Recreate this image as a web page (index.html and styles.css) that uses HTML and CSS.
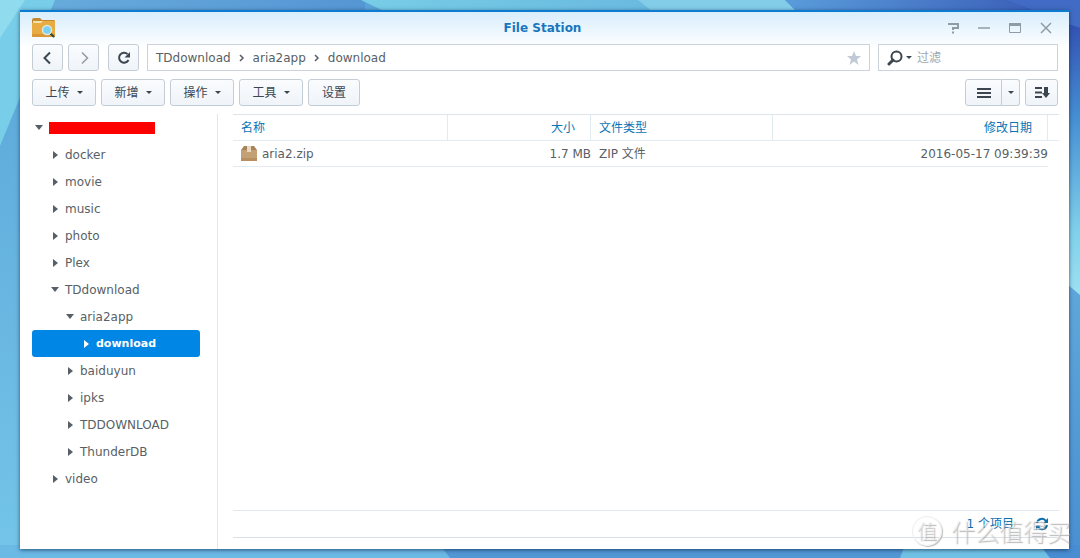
FILE: index.html
```html
<!DOCTYPE html>
<html lang="zh-CN">
<head>
<meta charset="utf-8">
<title>File Station</title>
<link rel="stylesheet" href="styles.css">
</head>
<body>
<svg class="wallpaper" viewBox="0 0 1080 558" preserveAspectRatio="none" aria-hidden="true">
  <defs>
    <linearGradient id="left" x1="0" y1="0" x2="0" y2="1"><stop offset="0" stop-color="#5aa5d8"/><stop offset="1" stop-color="#74c5e9"/></linearGradient>
    <linearGradient id="top" x1="0" y1="0" x2="1" y2="0"><stop offset="0" stop-color="#66abdc"/><stop offset="1" stop-color="#5596d4"/></linearGradient>
    <linearGradient id="teal" x1="0" y1="0" x2="1" y2="0"><stop offset="0" stop-color="#78cde6"/><stop offset="1" stop-color="#62b0dd"/></linearGradient>
    <linearGradient id="deep" x1="0" y1="0" x2="1" y2="0"><stop offset="0" stop-color="#5a9cdb"/><stop offset="1" stop-color="#3655b3"/></linearGradient>
    <linearGradient id="right" x1="0" y1="0" x2="0" y2="1"><stop offset="0" stop-color="#3351b3"/><stop offset=".35" stop-color="#4691d4"/><stop offset=".75" stop-color="#7fd0eb"/><stop offset="1" stop-color="#a0e2f2"/></linearGradient>
    <linearGradient id="low" x1="0" y1="0" x2="0" y2="1"><stop offset="0" stop-color="#60a8da"/><stop offset="1" stop-color="#4a8fd2"/></linearGradient>
  </defs>
  <path fill="url(#left)" d="M0 0H1080V558H0z"/>
  <path fill="#78cde8" d="M0 0H60L0 146z"/>
  <path fill="#90dbee" d="M0 0H25L0 38z"/>
  <path fill="url(#top)" d="M55 0H365V12H50z"/>
  <path fill="url(#teal)" d="M361 0H790V12H386z"/>
  <path fill="#83cde9" d="M638 0H785L797 12H653z"/>
  <path fill="url(#deep)" d="M785 0H1080V12H797z"/>
  <path fill="#314da9" d="M1005 0H1080V30L1065 24L1032 10z"/>
  <path fill="#416bc4" d="M1005 0H1080V28L1065 23L1032 10z"/>
  <path fill="url(#right)" d="M1060 24L1080 28V300H1060z"/>
  <path fill="url(#low)" d="M1060 278L1080 295V558H1060z"/>
  <path fill="#6bb9e5" d="M0 545H1080V558H0z"/>
  <path fill="#5298d5" d="M440 545H905L901 558H450z"/>
  <path fill="#70c1e6" d="M905 545H1048L1060 558H900z"/>
  <path fill="#488dd1" d="M1040 545H1080V558H1050z"/>
</svg>

<main class="window">
  <header class="titlebar">
    <svg class="app-icon" width="24" height="20" viewBox="0 0 24 20" aria-hidden="true">
      <path fill="#c38a32" d="M0 2Q0 0 2 0H8L10 2H22Q23 2 23 4V9H0z"/>
      <path fill="#f6e2ac" d="M1 3H22V6H1z"/>
      <path fill="#e8ac42" d="M0 5H9L11 3H23V18Q23 19 22 19H1Q0 19 0 18z"/>
      <path fill="#d99835" d="M0 16H23V18Q23 19 22 19H1Q0 19 0 18z"/>
      <path stroke="#2d4c42" stroke-width="2" stroke-linecap="round" d="M18.500 15.500L21.500 18.500"/>
      <circle cx="15" cy="12" r="4.500" fill="#79d0f0" stroke="#e0e8dd" stroke-width="1.500"/>
    </svg>
    <h1 class="title">File Station</h1>
    <div class="window-controls">
      <button class="window-button" aria-label="帮助"><svg width="14" height="14" viewBox="0 0 14 14"><path d="M2 3H12V7H7V9M7 10.500V12.500" fill="none" stroke="currentColor" stroke-width="2"/></svg></button>
      <button class="window-button" aria-label="最小化"><svg width="14" height="14" viewBox="0 0 14 14"><path d="M1 7H13" stroke="currentColor" stroke-width="1.500"/></svg></button>
      <button class="window-button" aria-label="最大化"><svg width="14" height="14" viewBox="0 0 14 14"><path d="M1.500 2.500H12.500V11.500H1.500z" fill="none" stroke="currentColor"/><path d="M1 2H13V5H1z" fill="currentColor"/></svg></button>
      <button class="window-button" aria-label="关闭"><svg width="14" height="14" viewBox="0 0 14 14"><path d="M2 2L12 12M12 2L2 12" stroke="currentColor" stroke-width="1.500"/></svg></button>
    </div>
  </header>

  <div class="navigation">
    <button class="button nav-button" aria-label="后退"><svg width="16" height="16" viewBox="0 0 16 16"><path d="M10 2.500L4.500 8L10 13.500" fill="none" stroke="currentColor" stroke-width="2"/></svg></button>
    <button class="button nav-button nav-forward" aria-label="前进"><svg width="16" height="16" viewBox="0 0 16 16"><path d="M6 2.500L11.500 8L6 13.500" fill="none" stroke="currentColor" stroke-width="1.500"/></svg></button>
    <button class="button nav-button refresh" aria-label="刷新"><svg width="16" height="16" viewBox="0 0 16 16"><path d="M11.500 4A5 5 0 1 0 12.500 10" fill="none" stroke="currentColor" stroke-width="2"/><path d="M14 2V7.500H8.500z" fill="currentColor"/></svg></button>
    <nav class="path" aria-label="路径">
      <a class="crumb" href="#">TDdownload</a>
      <svg width="6" height="8" viewBox="0 0 6 8"><path d="M1 1L4 4L1 7" fill="none" stroke="currentColor" stroke-width="1.500"/></svg>
      <a class="crumb" href="#">aria2app</a>
      <svg width="6" height="8" viewBox="0 0 6 8"><path d="M1 1L4 4L1 7" fill="none" stroke="currentColor" stroke-width="1.500"/></svg>
      <a class="crumb" href="#">download</a>
      <button class="favorite" aria-label="收藏"><svg width="14" height="14" viewBox="0 0 14 14"><path d="M7 0L9 5H14L10 8.500L11.500 14L7 10.500L2.500 14L4 8.500L0 5H5z" fill="currentColor"/></svg></button>
    </nav>
    <label class="search">
      <svg width="16" height="16" viewBox="0 0 16 16" aria-hidden="true"><circle cx="9.500" cy="6.500" r="5" fill="none" stroke="currentColor" stroke-width="2"/><path d="M6 10L2 14" stroke="currentColor" stroke-width="3" stroke-linecap="round"/></svg>
      <span class="caret"></span>
      <input class="search-input" type="text" placeholder="过滤" aria-label="过滤">
    </label>
  </div>

  <div class="toolbar">
    <button class="button menu-button">上传<span class="caret"></span></button>
    <button class="button menu-button">新增<span class="caret"></span></button>
    <button class="button menu-button">操作<span class="caret"></span></button>
    <button class="button menu-button">工具<span class="caret"></span></button>
    <button class="button settings">设置</button>
    <div class="view-split">
      <button class="button view-mode" aria-label="列表"><svg width="14" height="12" viewBox="0 0 14 12"><path d="M0 2H14M0 6H14M0 10H14" stroke="currentColor" stroke-width="2"/></svg></button>
      <button class="button view-menu" aria-label="查看方式"><span class="caret"></span></button>
    </div>
    <button class="button sort" aria-label="排序"><svg width="16" height="14" viewBox="0 0 16 14"><path d="M1 2H8M1 6.500H8M1 11H8" stroke="currentColor" stroke-width="2"/><path d="M10 1H14V7H16L12 12L8 7H10z" fill="currentColor"/></svg></button>
  </div>

  <div class="content">
    <aside class="sidebar">
      <ul class="tree">
        <li><a class="node level-0" href="#" aria-label="根目录"><span class="arrow open"></span><span class="redacted"></span></a></li>
        <li><a class="node level-1" href="#"><span class="arrow"></span>docker</a></li>
        <li><a class="node level-1" href="#"><span class="arrow"></span>movie</a></li>
        <li><a class="node level-1" href="#"><span class="arrow"></span>music</a></li>
        <li><a class="node level-1" href="#"><span class="arrow"></span>photo</a></li>
        <li><a class="node level-1" href="#"><span class="arrow"></span>Plex</a></li>
        <li><a class="node level-1" href="#"><span class="arrow open"></span>TDdownload</a></li>
        <li><a class="node level-2" href="#"><span class="arrow open"></span>aria2app</a></li>
        <li><a class="node level-3 selected" href="#"><span class="arrow"></span>download</a></li>
        <li><a class="node level-2" href="#"><span class="arrow"></span>baiduyun</a></li>
        <li><a class="node level-2" href="#"><span class="arrow"></span>ipks</a></li>
        <li><a class="node level-2" href="#"><span class="arrow"></span>TDDOWNLOAD</a></li>
        <li><a class="node level-2" href="#"><span class="arrow"></span>ThunderDB</a></li>
        <li><a class="node level-1" href="#"><span class="arrow"></span>video</a></li>
      </ul>
    </aside>

    <section class="files">
      <table class="file-table">
        <colgroup><col class="col-name"><col class="col-size"><col class="col-type"><col><col class="col-end"></colgroup>
        <thead>
          <tr><th>名称</th><th class="right">大小</th><th>文件类型</th><th class="right">修改日期</th><td></td></tr>
        </thead>
        <tbody>
          <tr>
            <td><span class="file-name"><svg width="16" height="15" viewBox="0 0 16 15" aria-hidden="true"><path fill="#a9845a" d="M3 0H13L16 4V15H0V4z"/><path fill="#c4a175" d="M0 4H16V15H0z"/><path fill="#b8905f" d="M0 12H16V15H0z"/><path fill="#ead9c2" d="M6 0H10V6H6z"/></svg>aria2.zip</span></td>
            <td class="right">1.7 MB</td><td>ZIP 文件</td><td class="right">2016-05-17 09:39:39</td><td class="end"></td>
          </tr>
        </tbody>
      </table>
      <footer class="status">
        <span>1 个项目</span>
        <button class="reload" aria-label="重新加载"><svg width="14" height="14" viewBox="0 0 14 14"><path d="M2 6A5 5 0 0 1 11 4M12 8A5 5 0 0 1 3 10" fill="none" stroke="currentColor" stroke-width="2"/><path d="M13 1V6H8zM1 13V8H6z" fill="currentColor"/></svg></button>
      </footer>
    </section>
  </div>
</main>

<div class="watermark"><span class="watermark-seal">值</span><span>什么值得买</span></div>
</body>
</html>
```

FILE: styles.css
```css
* {
  box-sizing: border-box;
}

body {
  margin: 0;
  min-height: 100vh;
  padding: 10px 11px 9px 20px;
  display: flex;
  position: relative;
  overflow: hidden;
  color: #585f66;
  font: 12px/18px "DejaVu Sans", "Noto Sans CJK SC", sans-serif;
}

button,
input {
  font: inherit;
  color: inherit;
}

button {
  padding: 0;
  border: 0;
  background: none;
}

a {
  color: inherit;
  text-decoration: none;
}

svg {
  display: block;
  flex: none;
}

.wallpaper {
  position: absolute;
  inset: 0;
  width: 100%;
  height: 100%;
}

.window {
  position: relative;
  flex: 1;
  min-width: 0;
  display: flex;
  flex-direction: column;
  border-top: 2px solid #0d7bd0;
  background: linear-gradient(#d8edfc, #fff 36px);
  box-shadow: 0 1px 4px rgba(0, 30, 60, 0.65);
}

.titlebar {
  height: 32px;
  padding: 0 16px 0 12px;
  display: grid;
  grid-template-columns: 1fr auto 1fr;
  align-items: center;
}

.title {
  margin: 0;
  color: #1976bd;
  font-size: 12px;
  font-weight: bold;
}

.window-controls {
  display: flex;
  justify-content: flex-end;
  gap: 17px;
  color: #8f9ba6;
}

.navigation {
  padding: 0 11px 0 12px;
  display: flex;
  height: 27px;
}

.button {
  height: 27px;
  display: flex;
  align-items: center;
  justify-content: center;
  border: 1px solid #c4ccd6;
  border-radius: 3px;
  background: linear-gradient(#fafcfe, #eff4f9);
  color: #3d4650;
}

.nav-button {
  width: 31px;
  margin-right: 5px;
}

.nav-forward {
  margin-right: 9px;
  color: #929ba4;
}

.refresh {
  margin-right: 8px;
}

.path,
.search {
  display: flex;
  align-items: center;
  border: 1px solid #ccd3dc;
  background: #fff;
}

.path {
  flex: 1;
  min-width: 0;
  gap: 8px;
  padding: 0 8px;
}

.favorite {
  margin-left: auto;
  color: #c0cad6;
}

.search {
  width: 180px;
  margin-left: 8px;
  padding: 0 8px;
  gap: 3px;
  color: #3d4650;
}

.search-input {
  flex: 1;
  min-width: 0;
  margin-left: 2px;
  padding: 0;
  border: 0;
  outline: 0;
  background: none;
}

.search-input::placeholder {
  color: #a0a6ac;
  opacity: 1;
}

.caret {
  border: 3px solid transparent;
  border-top-color: #3d4650;
  border-bottom: 0;
}

.toolbar {
  display: flex;
  gap: 5px;
  padding: 8px 11px 8px 12px;
}

.menu-button {
  width: 64px;
  gap: 7px;
}

.settings {
  width: 52px;
}

.view-split {
  display: flex;
  margin-left: auto;
}

.view-mode {
  width: 37px;
  border-radius: 3px 0 0 3px;
}

.view-menu {
  width: 18px;
  border-left: 0;
  border-radius: 0 3px 3px 0;
}

.sort {
  width: 33px;
}

.content {
  flex: 1;
  display: flex;
}

.sidebar {
  width: 198px;
  padding: 0 17px 0 12px;
  border-right: 1px solid #e4e7e9;
}

.tree {
  margin: 0;
  padding: 0;
  list-style: none;
}

.node {
  height: 27px;
  display: flex;
  align-items: center;
  border-radius: 3px;
}

.level-0 {
  padding-left: 3px;
}

.level-1 {
  padding-left: 19px;
}

.level-2 {
  padding-left: 34px;
}

.level-3 {
  padding-left: 50px;
}

.selected {
  background: #0086e5;
  color: #fff;
  font-size: 11px;
  font-weight: bold;
}

.arrow {
  width: 14px;
  flex: none;
}

.arrow::before {
  content: "";
  display: block;
  width: 0;
  margin-left: 2px;
  border: 4px solid transparent;
  border-left: 5px solid currentColor;
  border-right: 0;
}

.arrow.open::before {
  margin-left: 0;
  border: 4px solid transparent;
  border-top: 5px solid currentColor;
  border-bottom: 0;
}

.redacted {
  width: 106px;
  height: 12px;
  background: #f00;
}

.files {
  flex: 1;
  min-width: 0;
  display: flex;
  flex-direction: column;
  padding: 0 10px 11px 15px;
}

.file-table {
  width: 100%;
  table-layout: fixed;
  border-collapse: separate;
  border-spacing: 0;
}

.col-name {
  width: 215px;
}

.col-size {
  width: 143px;
}

.col-type {
  width: 182px;
}

.col-end {
  width: 11px;
}

.file-table th,
.file-table td {
  height: 26px;
  padding: 0 0 0 8px;
  border-bottom: 1px solid #e4ebf0;
  text-align: left;
}

.file-table thead th,
.file-table thead td {
  height: 27px;
  border-top: 1px solid #dce5ec;
}

.file-table th {
  border-right: 1px solid #e0eaf1;
  color: #0c73b4;
  font-weight: normal;
}

.file-table .right {
  text-align: right;
}

.file-table th.right {
  padding-right: 15px;
}

.file-table .end {
  border-bottom: 0;
}

.file-name {
  display: flex;
  align-items: center;
  gap: 5px;
}

.status {
  height: 28px;
  margin-top: auto;
  padding-right: 10px;
  display: flex;
  align-items: center;
  justify-content: flex-end;
  gap: 21px;
  border-top: 1px solid #e2e8ec;
  border-bottom: 1px solid #d8e1e6;
  color: #0c6eaf;
}

.watermark {
  position: absolute;
  right: 9px;
  bottom: 11px;
  display: flex;
  align-items: center;
  gap: 9px;
  color: rgba(240, 240, 240, 0.6);
  font: 24px/32px "Noto Sans CJK SC", sans-serif;
  font-weight: 300;
  text-shadow: 1px 1px 1px rgba(130, 130, 130, 0.6);
  pointer-events: none;
}

.watermark-seal {
  width: 30px;
  height: 30px;
  border: 1px solid #eee;
  border-radius: 50%;
  box-shadow: 1px 1px 1px #bbb;
  font-size: 20px;
  line-height: 28px;
  text-align: center;
}
```
